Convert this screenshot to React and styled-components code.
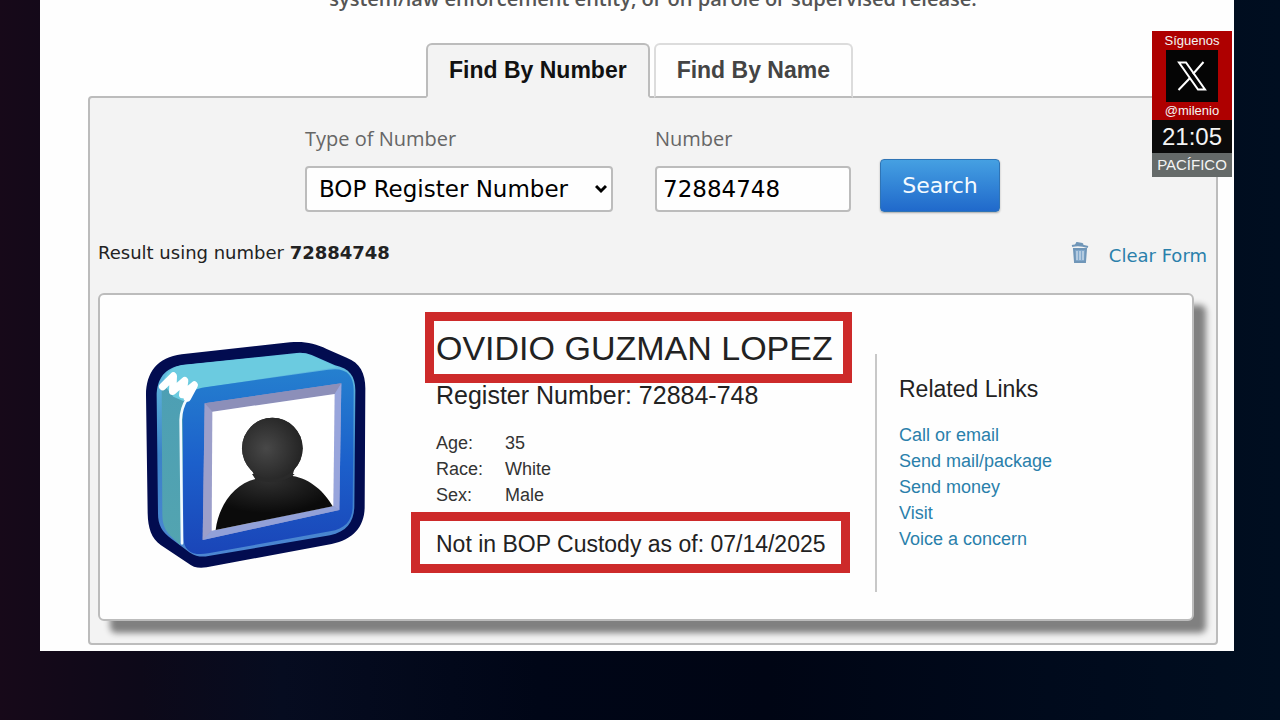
import { useState } from "react";
import styled, { createGlobalStyle } from "styled-components";

const GlobalStyle = createGlobalStyle`
    * {
        box-sizing: border-box;
    }
    body {
        margin: 0;
        font-family: "Liberation Sans", Arial, sans-serif;
        color: #222;
    }
    a {
        color: #2a80ab;
        text-decoration: none;
    }
`;

const Page = styled.div`
    position: relative;
    min-height: 100vh;
    overflow: hidden;
    background: linear-gradient(90deg, #170919 0%, #0d0919 11%, #060c20 22%, #000617 42%, #000514 60%, #000a1c 82%, #000e20 100%);
`;

const Sheet = styled.main`
    margin: 0 46px 0 40px;
    padding: 0 16px 6px 48px;
    background-color: #fefefe;
`;

const Notice = styled.div`
    display: flex;
    align-items: flex-end;
    justify-content: center;
    height: 12px;
    margin-bottom: 31px;
    overflow: hidden;
    font: 600 20px/26px "Open Sans", "Noto Sans", sans-serif;
    color: #555;
`;

const Tabs = styled.div`
    display: flex;
    justify-content: center;
    gap: 4px;
    padding-right: 27px;
`;

const Tab = styled.button`
    position: relative;
    height: 55px;
    margin-bottom: -2px;
    padding: 0 21px 2px;
    border: 2px solid ${(props) => (props.$active ? "#bcbcbc" : "#dcdcdc")};
    border-bottom-color: ${(props) => (props.$active ? "#f3f3f3" : "#bcbcbc")};
    border-radius: 6px 6px 0 0;
    background-color: ${(props) => (props.$active ? "#f3f3f3" : "#fefefe")};
    color: ${(props) => (props.$active ? "#111" : "#444")};
    font: bold 23px/28px "Liberation Sans", Arial, sans-serif;
    cursor: pointer;
`;

const Panel = styled.section`
    padding: 26px 22px 22px 8px;
    border: 2px solid #bcbcbc;
    border-radius: 4px;
    background-color: #f3f3f3;
`;

const Form = styled.form`
    display: flex;
    align-items: flex-end;
    justify-content: center;
    gap: 29px;
    padding-left: 13px;
`;

const Fields = styled.div`
    display: flex;
    gap: 42px;
`;

const Field = styled.div`
    display: flex;
    flex-direction: column;
    width: ${(props) => props.$width}px;
`;

const Label = styled.label`
    margin-bottom: 12px;
    font: 20px/30px "Open Sans", "Noto Sans", sans-serif;
    color: #666;
`;

const SelectWrap = styled.div`
    position: relative;
    svg {
        position: absolute;
        top: 18px;
        right: 6px;
        pointer-events: none;
    }
`;

const Select = styled.select`
    appearance: none;
    width: 100%;
    height: 46px;
    padding: 0 12px;
    border: 2px solid #bcbcbc;
    border-radius: 4px;
    background-color: #fefefe;
    color: #000;
    font: 23px "DejaVu Sans", Verdana, sans-serif;
`;

const Input = styled.input`
    width: 100%;
    height: 46px;
    padding: 0 6px;
    border: 2px solid #bcbcbc;
    border-radius: 4px;
    background-color: #fefefe;
    color: #000;
    font: 23px "DejaVu Sans", Verdana, sans-serif;
`;

const SearchButton = styled.button`
    width: 120px;
    height: 53px;
    border: 1px solid #2f74b5;
    border-radius: 4px;
    background: linear-gradient(#45a0e2, #2069cb);
    box-shadow: 0 1px 2px rgba(0, 0, 0, 0.3);
    color: #f4faff;
    font: 22px "DejaVu Sans", Verdana, sans-serif;
    cursor: pointer;
`;

const ResultBar = styled.div`
    display: flex;
    align-items: center;
    justify-content: space-between;
    height: 81px;
    margin-right: -13px;
    font: 18px/24px "DejaVu Sans", Verdana, sans-serif;
`;

const ClearForm = styled.a`
    display: flex;
    align-items: flex-end;
    gap: 20px;
    padding-top: 4px;
    svg {
        margin-bottom: 4px;
    }
`;

const Card = styled.article`
    display: grid;
    grid-template-columns: 336px minmax(0, 1fr) 317px;
    padding: 33px 0 27px;
    border: 2px solid #bcbcbc;
    border-radius: 6px;
    background-color: #fefefe;
    box-shadow: 12px 12px 6px #808080;
`;

const Portrait = styled.svg`
    width: 222px;
    height: 230px;
    margin: 12px 0 0 45px;
`;

const Marked = styled.div`
    position: relative;
    &::after {
        content: "";
        position: absolute;
        inset: ${(props) => props.$inset};
        border: 9px solid #cd2a2a;
        pointer-events: none;
    }
`;

const Name = styled.h1`
    margin: 0 0 12px;
    font-weight: normal;
    font-size: 34px;
    line-height: 40px;
`;

const RegisterNumber = styled.p`
    margin: 0 0 20px;
    font-size: 25px;
    line-height: 30px;
`;

const Facts = styled.dl`
    display: grid;
    grid-template-columns: 69px 1fr;
    margin: 0 0 21px;
    font-size: 18px;
    line-height: 26px;
    color: #333;
    dd {
        margin: 0;
    }
`;

const Custody = styled.p`
    margin: 0;
    font-size: 23px;
    line-height: 30px;
`;

const Related = styled.aside`
    margin-top: 26px;
    padding: 20px 0 40px 22px;
    border-left: 2px solid #c8c8c8;
    h2 {
        margin: 0 0 18px;
        font-weight: normal;
        font-size: 23px;
        line-height: 30px;
    }
    ul {
        margin: 0;
        padding: 0;
        list-style: none;
        font-size: 18px;
        line-height: 26px;
    }
`;

const Bug = styled.div`
    position: absolute;
    top: 31px;
    right: 48px;
    width: 80px;
    text-align: center;
    color: #f4f4f4;
`;

const Social = styled.div`
    display: flex;
    flex-direction: column;
    align-items: center;
    padding-top: 1px;
    background-color: #ae0000;
    font-size: 13px;
    line-height: 18px;
`;

const Clock = styled.div`
    background-color: #0a0a0a;
    font-size: 24px;
    line-height: 33px;
`;

const Zone = styled.div`
    background-color: #656a69;
    font-size: 15px;
    line-height: 24px;
`;

const LINKS = ["Call or email", "Send mail/package", "Send money", "Visit", "Voice a concern"];

const FACTS = [
    ["Age:", "35"],
    ["Race:", "White"],
    ["Sex:", "Male"],
];

function PortraitIcon() {
    return (
        <Portrait viewBox="45 30 666 690" role="img" aria-label="Inmate photo">
            <defs>
                <linearGradient id="front" x1="0" y1="0" x2="0" y2="1">
                    <stop offset="0" stopColor="#2580cf" />
                    <stop offset="0.5" stopColor="#1c60cb" />
                    <stop offset="1" stopColor="#1a45b8" />
                </linearGradient>
                <linearGradient id="side" x1="0" y1="0" x2="0" y2="1">
                    <stop offset="0" stopColor="#4d9fb4" />
                    <stop offset="1" stopColor="#53a4b0" />
                </linearGradient>
                <linearGradient id="edge" x1="0" y1="0" x2="0" y2="1">
                    <stop offset="0" stopColor="#69c5e2" />
                    <stop offset="0.5" stopColor="#3c82c8" />
                    <stop offset="1" stopColor="#4c86d2" />
                </linearGradient>
                <radialGradient id="head" cx="0.4" cy="0.5" r="0.6">
                    <stop offset="0" stopColor="#484848" />
                    <stop offset="1" stopColor="#242424" />
                </radialGradient>
                <radialGradient id="body" cx="0.45" cy="0.1" r="0.6">
                    <stop offset="0" stopColor="#303030" />
                    <stop offset="1" stopColor="#0b0b0b" />
                </radialGradient>
            </defs>
            <path
                d="M48 195C48 128 82 82 155 73L480 37C520 33 555 39 590 57L650 83C690 98 706 130 706 175L704 530C704 590 670 628 605 642L230 712C205 716 190 712 172 698L92 645C64 625 54 595 53 550Z"
                fill="#020c50"
            />
            <path
                d="M80 200C80 145 105 114 155 105L500 69Q525 67 545 75L615 106C660 116 677 140 676 185L673 530C672 575 650 605 600 616L235 678Q205 684 180 668L125 627C95 605 84 585 84 550Z"
                fill="url(#edge)"
            />
            <path d="M95 165L165 190L150 645L122 618C103 600 97 580 97 550Z" fill="url(#side)" />
            <path d="M98 160C108 124 130 109 160 105L505 71Q525 69 545 77L622 112L240 170C205 176 185 185 165 215L130 200Z" fill="#6bcbe0" />
            <path
                d="M158 250C158 200 175 180 225 172L595 119C650 111 672 135 671 185L668 530C667 572 646 596 600 604L235 670C190 678 160 665 160 620Z"
                fill="url(#front)"
            />
            <path d="M156 640L152 270Q153 235 172 205" fill="none" stroke="#f2fbff" strokeWidth="8" strokeLinecap="round" />
            <path
                d="M98 170L130 138L128 184L164 152L158 194L193 165L172 204"
                fill="none"
                stroke="#fff"
                strokeWidth="22"
                strokeLinecap="round"
                strokeLinejoin="round"
            />
            <path d="M224 220L634 160L628 540L218 630Z" fill="#9096c8" />
            <path d="M224 220L634 160L614 192L247 245Z" fill="#8c8fb9" />
            <path d="M224 220L247 245L245 602L218 630Z" fill="#9c9fca" />
            <path d="M634 160L614 192L610 528L628 540Z" fill="#98a5dc" />
            <path d="M218 630L245 602L610 528L628 540Z" fill="#92a1d8" />
            <path d="M247 245L614 192L610 528L245 602Z" fill="#fff" />
            <path d="M257 600C265 530 310 463 376 447L366 432H494L487 438C540 445 586 488 608 529Z" fill="url(#body)" />
            <ellipse cx="427" cy="355" rx="91" ry="92" fill="url(#head)" />
            <path d="M366 420L376 447Q430 470 487 438L494 415Z" fill="#2a2a2a" />
            <ellipse cx="427" cy="355" rx="91" ry="92" fill="url(#head)" />
        </Portrait>
    );
}

function TrashIcon() {
    return (
        <svg width="18" height="22" viewBox="0 0 18 22" fill="none" stroke="#7096b8" aria-hidden="true">
            <path d="M1 4Q8 2 17 5M5 3L6 1L11 2L12 3" strokeWidth="2" />
            <path d="M3 7H15L14 20H4Z" fill="#82a8cb" strokeWidth="2" />
            <path d="M6 9V18M9 9V18M12 9V18" stroke="#e6eef5" strokeWidth="1" />
        </svg>
    );
}

function XLogo() {
    return (
        <svg width="52" height="52" viewBox="0 0 52 52" aria-label="X" role="img">
            <rect width="52" height="52" fill="#050505" />
            <path d="M13 12.5H20L39 39.5H32Z" fill="none" stroke="#fff" strokeWidth="2" />
            <path d="M37.5 12L27 24M24 28L12.5 40" fill="none" stroke="#fff" strokeWidth="2" />
        </svg>
    );
}

function App() {
    const [tab, setTab] = useState("number");
    const [number, setNumber] = useState("72884748");
    const clear = (event) => {
        event.preventDefault();
        setNumber("");
    };
    return (
        <Page>
            <GlobalStyle />
            <Sheet>
                <Notice>system/law enforcement entity, or on parole or supervised release.</Notice>
                <Tabs role="tablist">
                    <Tab role="tab" aria-selected={tab === "number"} $active={tab === "number"} onClick={() => setTab("number")}>
                        Find By Number
                    </Tab>
                    <Tab role="tab" aria-selected={tab === "name"} $active={tab === "name"} onClick={() => setTab("name")}>
                        Find By Name
                    </Tab>
                </Tabs>
                <Panel>
                    <Form onSubmit={(event) => event.preventDefault()}>
                        <Fields>
                            <Field $width={308}>
                                <Label htmlFor="type">Type of Number</Label>
                                <SelectWrap>
                                    <Select id="type">
                                        <option>BOP Register Number</option>
                                    </Select>
                                    <svg width="12" height="10" viewBox="0 0 12 10" aria-hidden="true">
                                        <path d="M1 2L6 7L11 2" fill="none" stroke="#000" strokeWidth="3" />
                                    </svg>
                                </SelectWrap>
                            </Field>
                            <Field $width={196}>
                                <Label htmlFor="number">Number</Label>
                                <Input id="number" value={number} onChange={(event) => setNumber(event.target.value)} />
                            </Field>
                        </Fields>
                        <SearchButton type="submit">Search</SearchButton>
                    </Form>
                    <ResultBar>
                        <span>
                            Result using number <b>72884748</b>
                        </span>
                        <ClearForm href="#clear" onClick={clear}>
                            <TrashIcon />
                            Clear Form
                        </ClearForm>
                    </ResultBar>
                    <Card>
                        <PortraitIcon />
                        <div>
                            <Marked $inset="-16px 23px -15px -11px">
                                <Name>OVIDIO GUZMAN LOPEZ</Name>
                            </Marked>
                            <RegisterNumber>Register Number: 72884-748</RegisterNumber>
                            <Facts>
                                {FACTS.map(([term, value]) => [<dt key={term}>{term}</dt>, <dd key={value}>{value}</dd>])}
                            </Facts>
                            <Marked $inset="-17px 25px -14px -25px">
                                <Custody>Not in BOP Custody as of: 07/14/2025</Custody>
                            </Marked>
                        </div>
                        <Related>
                            <h2>Related Links</h2>
                            <ul>
                                {LINKS.map((link) => (
                                    <li key={link}>
                                        <a href="#related">{link}</a>
                                    </li>
                                ))}
                            </ul>
                        </Related>
                    </Card>
                </Panel>
            </Sheet>
            <Bug>
                <Social>
                    Síguenos
                    <XLogo />
                    @milenio
                </Social>
                <Clock>21:05</Clock>
                <Zone>PACÍFICO</Zone>
            </Bug>
        </Page>
    );
}

export default App;
